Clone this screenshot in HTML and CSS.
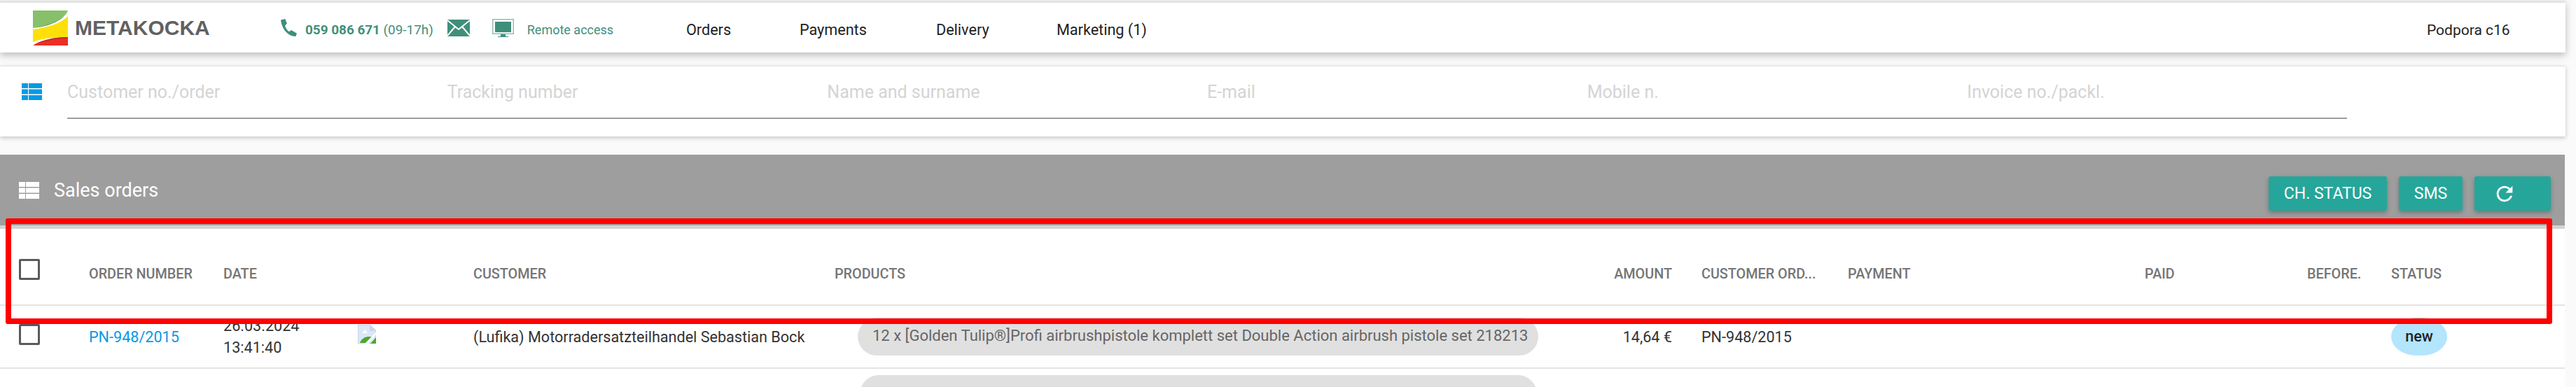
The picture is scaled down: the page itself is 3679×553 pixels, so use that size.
FILE: index.html
```html
<!DOCTYPE html>
<html lang="en">
<head>
    <meta charset="UTF-8">
    <title>Sales orders - Metakocka</title>
    <link rel="stylesheet" href="styles.css">
</head>
<body>
    <header class="navbar">
        <a class="logo">
            <svg class="logo-mark" viewBox="0 0 50 50">
                <rect width="50" height="50" fill="#fff"/>
                <path d="M0 0H50C44 13 24 21 0 25Z" fill="#87c06a"/>
                <path d="M0 25C24 21 43 13 50 1C43 14 24 23 0 25Z" fill="#4f9a45"/>
                <path d="M0 27C24 24 42 17 50 8V38C30 38 12 40 0 45Z" fill="#fde00a"/>
                <path d="M0 50C8 44 26 38 50 38V50Z" fill="#ee2e24"/>
                <path d="M3 50C12 44 30 40 50 40V38C28 38 12 43 3 50Z" fill="#b5302a"/>
            </svg>
            <span class="logo-text">METAKOCKA</span>
        </a>
        <div class="contact">
            <svg class="ico-phone" viewBox="0 0 24 24"><path d="M1 1.500 7 0l2.500 6.500L6.800 9c.7 3.300 2.600 6.300 5.600 8.400l3-2 7.600 4.500-1.500 4C12 24.500 2.500 15 1 1.500Z"/></svg>
            <span class="phone"><b>059 086 671</b> (09-17h)</span>
            <svg class="ico-mail" viewBox="0 0 32 24"><rect width="32" height="24"/><path d="M0 1 16 14 32 1M0 23 11 10M32 23 21 10" fill="none" stroke="#fff" stroke-width="2"/></svg>
            <svg class="ico-screen" viewBox="0 0 31 26"><path d="M0 0H31V22H0ZM1.500 1.500V20.500H29.500V1.500Z" fill="#8fbfb1"/><rect x="4" y="4" width="23" height="15"/><path d="M8 25H23V26H8ZM12 22H19V25H12Z"/></svg>
            <span class="remote">Remote access</span>
        </div>
        <nav class="menu">
            <a class="m-orders">Orders</a>
            <a class="m-payments">Payments</a>
            <a class="m-delivery">Delivery</a>
            <a class="m-marketing">Marketing (1)</a>
        </nav>
        <a class="user">Podpora c16</a>
    </header>

    <section class="search">
        <svg class="ico-list blue" viewBox="0 0 29 24"><path d="M0 0H9V7H0ZM10 0H29V7H10ZM0 8.500H9V15.500H0ZM10 8.500H29V15.500H10ZM0 17H9V24H0ZM10 17H29V24H10Z"/></svg>
        <div class="search-fields">
            <label>Customer no./order</label>
            <label>Tracking number</label>
            <label>Name and surname</label>
            <label>E-mail</label>
            <label>Mobile n.</label>
            <label>Invoice no./packl.</label>
        </div>
    </section>

    <section class="orders">
        <div class="orders-head">
            <svg class="ico-list white" viewBox="0 0 29 24"><path d="M0 0H9V7H0ZM10 0H29V7H10ZM0 8.500H9V15.500H0ZM10 8.500H29V15.500H10ZM0 17H9V24H0ZM10 17H29V24H10Z"/></svg>
            <span class="orders-title">Sales orders</span>
            <div class="actions">
                <button class="btn btn-status">CH. STATUS</button>
                <button class="btn btn-sms">SMS</button>
                <button class="btn btn-refresh">
                    <svg viewBox="0 0 24 24"><path d="M17.650 6.350C16.200 4.900 14.210 4 12 4c-4.420 0-7.990 3.580-7.990 8s3.570 8 7.990 8c3.730 0 6.840-2.550 7.730-6h-2.080c-.82 2.330-3.040 4-5.650 4-3.310 0-6-2.690-6-6s2.690-6 6-6c1.660 0 3.140.69 4.220 1.780L13 11h7V4l-2.350 2.350z"/></svg>
                </button>
            </div>
        </div>
        <table class="grid">
            <colgroup>
                <col class="c-check"><col class="c-number"><col class="c-date"><col class="c-img"><col class="c-customer"><col class="c-products"><col class="c-amount"><col class="c-custord"><col class="c-payment"><col class="c-paid"><col class="c-before"><col class="c-status">
            </colgroup>
            <thead>
                <tr>
                    <th class="check"><span class="box head"></span></th>
                    <th>Order number</th>
                    <th>Date</th>
                    <th></th>
                    <th>Customer</th>
                    <th>Products</th>
                    <th class="num">Amount</th>
                    <th>Customer ord...</th>
                    <th>Payment</th>
                    <th>Paid</th>
                    <th>Before.</th>
                    <th>Status</th>
                </tr>
            </thead>
            <tbody>
                <tr>
                    <td class="check"><span class="box"></span></td>
                    <td><a class="link">PN-948/2015</a></td>
                    <td class="date">26.03.2024<br>13:41:40</td>
                    <td class="thumb">
                        <svg viewBox="0 0 26 27">
                            <path d="M0 0H18L26 8V27H0Z" fill="#c9d6e6"/>
                            <path d="M1 1H17V9H25V26H1Z" fill="#dbe7f8"/>
                            <path d="M6 12 10 7 14 12Z" fill="#fff"/>
                            <path d="M3 26C5 20 12 15 21 18L14 26Z" fill="#4ea72e"/>
                            <path d="M26 11V14L15 27H10Z" fill="#fff"/>
                            <path d="M26 18V27H18Z" fill="#4ea72e"/>
                        </svg>
                    </td>
                    <td>(Lufika) Motorradersatzteilhandel Sebastian Bock</td>
                    <td><span class="chip">12 x [Golden Tulip®]Profi airbrushpistole komplett set Double Action airbrush pistole set 218213</span></td>
                    <td class="num">14,64 €</td>
                    <td>PN-948/2015</td>
                    <td></td>
                    <td></td>
                    <td></td>
                    <td><span class="badge">new</span></td>
                </tr>
                <tr class="next">
                    <td colspan="5"></td>
                    <td><span class="chip chip-next"></span></td>
                    <td colspan="6"></td>
                </tr>
            </tbody>
        </table>
    </section>

    <div class="highlight"></div>
</body>
</html>
```

FILE: styles.css
```css
html, body {
    height: 553px;
    overflow: hidden;
}

body {
    margin: 0;
    background: #fafafa;
    font-family: 'Roboto', sans-serif;
    color: #333;
    position: relative;
}

a { text-decoration: none; }

/* top bar */
.navbar {
    display: flex;
    align-items: center;
    width: 3664px;
    height: 71px;
    margin-top: 1px;
    border-top: 3px solid #e4e4e4;
    background: #fff;
    box-shadow: 0 4px 10px rgba(0,0,0,0.25);
    position: relative;
}

.logo {
    display: flex;
    align-items: center;
    width: 400px;
    padding-left: 47px;
    box-sizing: border-box;
}

.logo-mark {
    width: 50px;
    height: 50px;
    flex: none;
}

.logo-text {
    margin-left: 10px;
    font-family: 'Liberation Sans', sans-serif;
    font-weight: bold;
    font-size: 30px;
    color: #616161;
}

.contact {
    display: flex;
    align-items: center;
    width: 580px;
    color: #3f8f7b;
}

.contact svg { fill: #3f8f7b; flex: none; }

.ico-phone { width: 25px; height: 25px; }
.ico-mail { width: 32px; height: 24px; margin-left: 20px; }
.ico-screen { width: 31px; height: 26px; margin-left: 32px; }

.phone {
    margin-left: 11px;
    padding-top: 5px;
    font-size: 18.9px;
}

.phone b { font-weight: 700; }

.remote {
    margin-left: 19px;
    padding-top: 5px;
    font-size: 18px;
}

.menu {
    display: flex;
    flex: 1;
    padding-top: 6px;
    font-size: 21.6px;
}

.menu a { color: #222; }
.m-orders { width: 162px; }
.m-payments { width: 195px; }
.m-delivery { width: 172px; }

.user {
    width: 198px;
    padding-top: 6px;
    font-size: 21px;
    color: #222;
}

/* search panel */
.search {
    display: flex;
    align-items: flex-start;
    width: 3664px;
    height: 101px;
    margin-top: 19px;
    box-sizing: border-box;
    border-top: 1px solid #e4e4e4;
    background: #fff;
    box-shadow: 0 2px 6px rgba(0,0,0,0.22);
}

.ico-list { width: 29px; height: 24px; flex: none; }
.ico-list.blue { fill: #039be5; margin: 24px 0 0 31px; }
.ico-list.white { fill: #fff; margin-left: 27px; }

.search-fields {
    display: grid;
    grid-template-columns: repeat(6, 1fr);
    width: 3256px;
    height: 75px;
    margin-left: 36px;
    box-sizing: border-box;
    border-bottom: 2px solid #9e9e9e;
    padding-top: 21px;
}

.search-fields label {
    font-size: 25px;
    line-height: 32px;
    color: #d4d4d4;
}

/* orders */
.orders {
    width: 3663px;
    margin-top: 26px;
}

.orders-head {
    display: flex;
    align-items: center;
    height: 101px;
    border-bottom: 5px solid #d3d3d3;
    background: #9e9e9e;
    position: relative;
}

.orders-title {
    margin-left: 21px;
    font-size: 27px;
    color: #fff;
}

.actions {
    display: flex;
    gap: 17px;
    margin: 10px 20px 0 auto;
}

.btn {
    height: 49px;
    padding: 0;
    border: none;
    border-radius: 3px;
    background: #26a69a;
    color: #fff;
    font-family: 'Roboto', sans-serif;
    font-size: 23px;
    font-weight: 400;
    box-shadow: 0 3px 6px rgba(0,0,0,0.25);
}

.btn-status { width: 169px; }
.btn-sms { width: 91px; }

.btn-refresh {
    width: 109px;
    display: flex;
    align-items: center;
    padding-left: 26px;
    box-sizing: border-box;
}

.btn-refresh svg { width: 34px; height: 34px; fill: #fff; }

.grid {
    width: 3663px;
    border-collapse: collapse;
    table-layout: fixed;
    background: #fff;
}

.c-check { width: 127px; }
.c-number { width: 192px; }
.c-date { width: 192px; }
.c-img { width: 165px; }
.c-customer { width: 516px; }
.c-products { width: 1112px; }
.c-amount { width: 126px; }
.c-custord { width: 209px; }
.c-payment { width: 424px; }
.c-paid { width: 232px; }
.c-before { width: 120px; }
.c-status { width: 248px; }

.grid th {
    height: 109px;
    padding: 21px 0 0;
    box-sizing: border-box;
    border-bottom: 2px solid #e4e4e4;
    font-size: 19.8px;
    font-weight: 500;
    text-align: left;
    text-transform: uppercase;
    color: #757575;
    white-space: nowrap;
}

.grid td {
    height: 90px;
    padding: 0;
    box-sizing: border-box;
    border-bottom: 2px solid #e4e4e4;
    font-size: 21.6px;
    color: #333;
    white-space: nowrap;
}

.grid .num { text-align: right; padding-right: 42px; }

.grid .check { padding: 0 0 0 27px; }
.grid th.check { padding-top: 7px; }

.box {
    display: block;
    width: 30px;
    height: 30px;
    box-sizing: border-box;
    border: 3px solid #5a5a5a;
    border-radius: 2px;
    margin-bottom: 6px;
}

.box.head { margin-bottom: 0; }

.link { color: #039be5; }

.grid .date { line-height: 31px; }

.thumb svg { display: block; width: 26px; height: 27px; margin-bottom: 8px; }

.chip {
    display: block;
    width: 972px;
    height: 54px;
    margin-left: 33px;
    padding: 0 21px;
    box-sizing: border-box;
    border-radius: 27px;
    background: #e0e0e0;
    color: #666;
    font-size: 22px;
    line-height: 52px;
}

.grid tr.next td {
    height: 70px;
    vertical-align: top;
    padding-top: 9px;
    border: none;
}

.chip-next {
    width: 967px;
    margin-left: 36px;
    height: 60px;
}

.badge {
    display: block;
    width: 80px;
    height: 54px;
    border-radius: 36px / 27px;
    background: #b3e5fc;
    color: #222;
    font-weight: 500;
    text-align: center;
    line-height: 54px;
}

/* red marker drawn over the table header */
.highlight {
    position: absolute;
    left: 8px;
    top: 312px;
    width: 3637px;
    height: 151px;
    box-sizing: border-box;
    border: 8px solid #f00;
    border-radius: 3px;
}
```
